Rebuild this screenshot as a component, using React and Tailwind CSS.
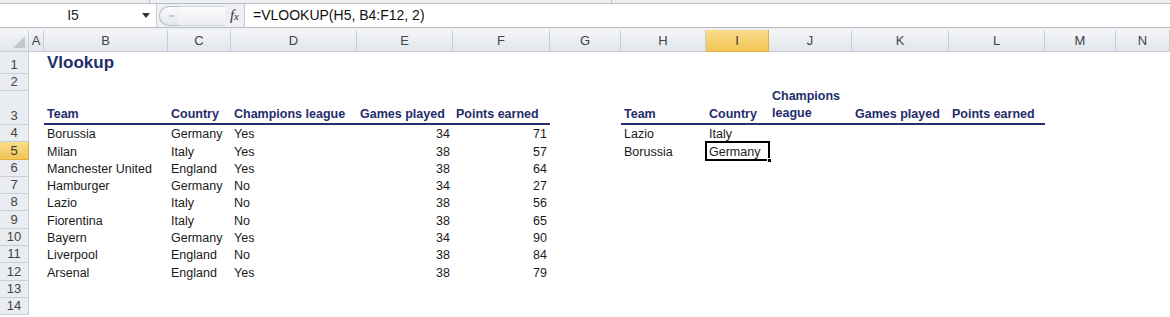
import React from "react";

const columns = [
  { key: "A", w: "w-[15px]" },
  { key: "B", w: "w-[124px]" },
  { key: "C", w: "w-[63px]" },
  { key: "D", w: "w-[126px]" },
  { key: "E", w: "w-[96px]" },
  { key: "F", w: "w-[97px]" },
  { key: "G", w: "w-[71px]" },
  { key: "H", w: "w-[85px]" },
  { key: "I", w: "w-[63px]" },
  { key: "J", w: "w-[83px]" },
  { key: "K", w: "w-[97px]" },
  { key: "L", w: "w-[96px]" },
  { key: "M", w: "w-[71px]" },
  { key: "N", w: "flex-1" },
];

const teams = [
  ["Borussia", "Germany", "Yes", 34, 71],
  ["Milan", "Italy", "Yes", 38, 57],
  ["Manchester United", "England", "Yes", 38, 64],
  ["Hamburger", "Germany", "No", 34, 27],
  ["Lazio", "Italy", "No", 38, 56],
  ["Fiorentina", "Italy", "No", 38, 65],
  ["Bayern", "Germany", "Yes", 34, 90],
  ["Liverpool", "England", "No", 38, 84],
  ["Arsenal", "England", "Yes", 38, 79],
];

const lookup = {
  4: ["Lazio", "Italy"],
  5: ["Borussia", "Germany"],
};

function RowHeader({ n, h, active }) {
  return (
    <div
      className={`w-[29px] shrink-0 ${h} flex items-end justify-center pb-[1px] border-r border-b text-[13px] ${
        active
          ? "bg-gradient-to-b from-[#f9dd8a] to-[#f1c555] border-[#e1ad44] text-[#3a3a3a]"
          : "bg-[#e9ecf0] border-[#c9ced5] text-[#444]"
      }`}
    >
      {n}
    </div>
  );
}

function Cell({ w, children, className = "" }) {
  return (
    <div className={`${w} shrink-0 flex items-end px-[3px] whitespace-nowrap ${className}`}>
      {children}
    </div>
  );
}

function DataRow({ n, h, cells, active }) {
  return (
    <div className={`flex ${h}`}>
      <RowHeader n={n} h={h} active={active} />
      {columns.map((c) => (
        <Cell key={c.key} w={c.w} className={cells[c.key]?.className || ""}>
          {cells[c.key]?.content}
        </Cell>
      ))}
    </div>
  );
}

export default function App() {
  const headerLeft = "border-b-2 border-[#22306e] text-[#1f2d6b] font-bold pb-[1px]";

  const rows = [];

  // title and empty row
  rows.push(
    <DataRow
      key={1}
      n={1}
      h="h-[22px]"
      cells={{
        B: {
          content: <span className="text-[17px] font-bold text-[#1f2d6b] leading-[20px]">Vlookup</span>,
          className: "pb-[1px]",
        },
      }}
    />
  );
  rows.push(<DataRow key={2} n={2} h="h-[17px]" cells={{}} />);

  // row 3 - table headers
  rows.push(
    <DataRow
      key={3}
      n={3}
      h="h-[34px]"
      cells={{
        B: { content: "Team", className: headerLeft },
        C: { content: "Country", className: headerLeft },
        D: { content: "Champions league", className: headerLeft },
        E: { content: "Games played", className: headerLeft },
        F: { content: "Points earned", className: headerLeft },
        H: { content: "Team", className: headerLeft },
        I: { content: "Country", className: headerLeft },
        J: {
          content: (
            <span className="whitespace-normal leading-[17px]">
              Champions
              <br />
              league
            </span>
          ),
          className: headerLeft,
        },
        K: { content: "Games played", className: headerLeft },
        L: { content: "Points earned", className: headerLeft },
      }}
    />
  );

  for (let i = 0; i < 11; i++) {
    const n = i + 4;
    const t = teams[i];
    const cells = {};
    if (t) {
      cells.B = { content: t[0] };
      cells.C = { content: t[1] };
      cells.D = { content: t[2] };
      cells.E = { content: t[3], className: "justify-end" };
      cells.F = { content: t[4], className: "justify-end" };
    }
    if (lookup[n]) {
      cells.H = { content: lookup[n][0] };
      cells.I = { content: lookup[n][1] };
    }
    if (n === 5) {
      cells.I = {
        content: (
          <>
            {lookup[n][1]}
            <span className="absolute -inset-[1px] border-2 border-black pointer-events-none" />
            <span className="absolute -right-[3px] -bottom-[3px] w-[5px] h-[5px] bg-black border border-white" />
          </>
        ),
        className: "relative",
      };
    }
    rows.push(<DataRow key={n} n={n} h="h-[17.3px]" cells={cells} active={n === 5} />);
  }

  return (
    <div className="w-[1170px] h-[317px] overflow-hidden bg-white font-['Liberation_Sans',Arial,sans-serif] text-[12.5px] text-[#1a1a1a] leading-[15px]">
      {/* top strip left from the ribbon */}
      <div className="h-[4px] flex bg-[#eef0f3] border-b border-[#b8bdc4]">
        <div className="w-[150px] border-r border-[#c3c7cd]" />
        <div className="w-[462px] border-r border-[#c3c7cd]" />
      </div>

      {/* formula bar */}
      <div className="h-[24px] flex bg-[#eef0f3] border-b border-[#b8bdc4]">
        <div className="w-[157px] bg-white flex items-center relative border-r border-[#c9cdd3]">
          <span className="flex-1 text-center text-[14px] text-[#222] pl-[4px]">I5</span>
          <svg className="w-[8px] h-[5px] mr-[6px]" viewBox="0 0 8 5">
            <path d="M0 0h8L4 5z" fill="#333" />
          </svg>
        </div>
        <div className="w-[87px] flex items-center">
          <div className="ml-[2px] h-[20px] w-[20px] rounded-l-full border border-r-0 border-[#b6bbc2] bg-gradient-to-b from-[#fafbfc] to-[#e3e6ea] flex items-center justify-center">
            <span className="block w-[5px] h-[2px] bg-[#c4c8cd] rounded-full ml-[3px]" />
          </div>
          <div className="flex-1 h-[20px] border-y border-[#d2d5da] bg-gradient-to-b from-[#fafbfc] to-[#eceef1]" />
          <span className="px-[5px] font-['Liberation_Serif',serif] italic text-[15px] text-[#333] leading-none">
            f<span className="text-[11px]">x</span>
          </span>
        </div>
        <div className="flex-1 bg-white border-l border-[#c9cdd3] flex items-center pl-[8px] text-[14px] text-[#111]">
          =VLOOKUP(H5, B4:F12, 2)
        </div>
      </div>
      <div className="h-[2px] bg-[#eef0f3]" />

      {/* column headers */}
      <div className="flex h-[22px]">
        <div className="w-[29px] shrink-0 relative bg-gradient-to-b from-[#f4f6f8] to-[#e2e5ea] border-r border-b border-[#c9ced5]">
          <svg className="absolute right-[3px] bottom-[3px] w-[12px] h-[12px]" viewBox="0 0 12 12">
            <path d="M12 0V12H0z" fill="#c3c8cf" />
          </svg>
        </div>
        {columns.map((c) => (
          <div
            key={c.key}
            className={`${c.w} shrink-0 flex items-center justify-center border-r border-b text-[13px] ${
              c.key === "I"
                ? "bg-gradient-to-b from-[#f9dd8a] to-[#f1c555] border-[#e1ad44] text-[#3a3a3a]"
                : "bg-gradient-to-b from-[#f4f6f8] to-[#e2e5ea] border-[#c9ced5] text-[#444]"
            }`}
          >
            {c.key}
          </div>
        ))}
      </div>

      {rows}
    </div>
  );
}
